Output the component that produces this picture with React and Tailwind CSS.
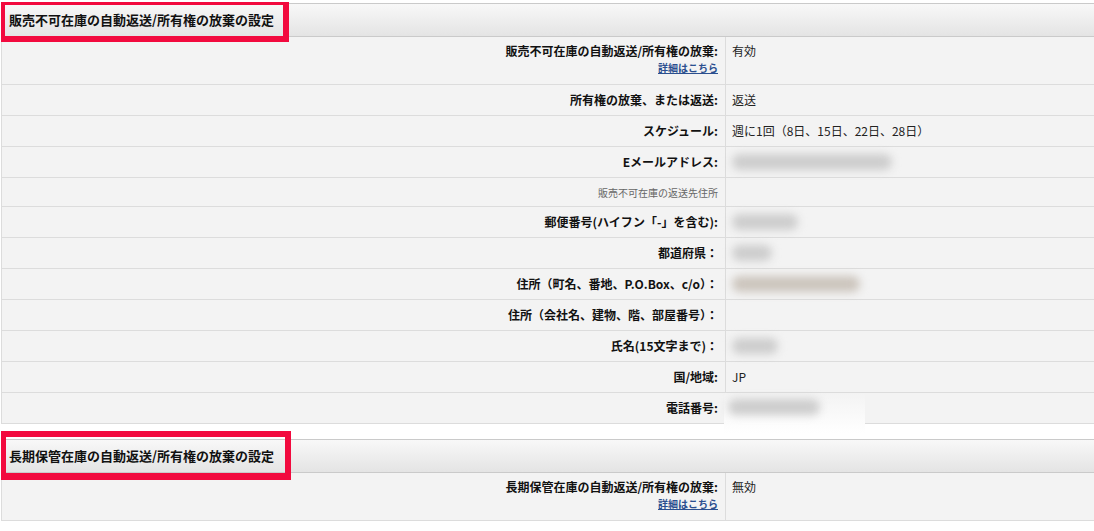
import React from "react";

const font = { fontFamily: '"Noto Sans CJK JP", "Noto Sans", sans-serif' };

function Blur({ w, tint }) {
  return (
    <div className="relative h-[20px]" style={{ width: w }}>
      <div
        className={`absolute inset-x-0 top-[2px] h-[16px] rounded-full blur-[4px] ${
          tint ? "bg-[#ccc5bd]" : "bg-[#cdcdcd]"
        }`}
      />
    </div>
  );
}

function Row({ label, value, link, sub, tall }) {
  return (
    <div className="grid grid-cols-[724px_1fr] border-b border-[#dcdcdc]">
      <div
        className={`border-r border-[#dcdcdc] pr-[7px] text-right ${
          tall ? "h-[47px] pt-[6px]" : sub ? "flex h-[28px] items-center justify-end" : "flex h-[30px] items-center justify-end"
        }`}
      >
        {sub ? (
          <span className="text-[10px] text-[#666]">{sub}</span>
        ) : (
          <div className="flex flex-col items-end">
            <span className="text-[12px] font-bold leading-[16px] text-[#111]">{label}</span>
            {link && (
              <a className="mt-[3px] text-[10px] font-bold leading-[12px] text-[#2b4f8f] underline">
                詳細はこちら
              </a>
            )}
          </div>
        )}
      </div>
      <div
        className={`pl-[6px] text-[12px] text-[#222] ${
          tall ? "pt-[6px] leading-[16px]" : "flex items-center"
        }`}
      >
        {value}
      </div>
    </div>
  );
}

function Header({ title, redClass }) {
  return (
    <div className="relative">
      <div className="flex h-[34px] items-center border-y border-[#cacaca] bg-gradient-to-b from-[#f8f8f8] to-[#e4e4e4] pl-[7px]">
        <span className="text-[13px] font-bold text-[#111]">{title}</span>
      </div>
      <div className={`pointer-events-none absolute left-[-1px] border-[#f20a3e] ${redClass}`} />
    </div>
  );
}

export default function App() {
  return (
    <div className="min-h-[531px] w-[1094px] overflow-hidden bg-white pt-[3px]" style={font}>
      {/* 販売不可在庫 */}
      <div className="ml-px border-l border-[#dcdcdc] bg-[#f3f3f3]">
        <Header
          title="販売不可在庫の自動返送/所有権の放棄の設定"
          redClass="top-[-1px] h-[40px] w-[288px] border-t-[3px] border-l-[4px] border-r-[6px] border-b-[6px]"
        />
        <Row tall link label="販売不可在庫の自動返送/所有権の放棄:" value="有効" />
        <Row label="所有権の放棄、または返送:" value="返送" />
        <Row label="スケジュール:" value="週に1回（8日、15日、22日、28日）" />
        <Row label="Eメールアドレス:" value={<Blur w={160} />} />
        <Row sub="販売不可在庫の返送先住所" />
        <Row label="郵便番号(ハイフン「-」を含む):" value={<Blur w={66} />} />
        <Row label="都道府県：" value={<Blur w={40} />} />
        <Row label="住所（町名、番地、P.O.Box、c/o）：" value={<Blur w={128} tint />} />
        <Row label="住所（会社名、建物、階、部屋番号）：" value={null} />
        <Row label="氏名(15文字まで)：" value={<Blur w={46} />} />
        <Row label="国/地域:" value="JP" />
        <div className="relative">
          <Row label="電話番号:" value={null} />
          <div className="absolute left-[722px] top-0 h-[40px] w-[141px] bg-gradient-to-b from-[#f3f3f3] to-white">
            <div className="absolute left-[4px] top-[6px] h-[16px] w-[92px] rounded-full bg-[#cdcdcd] blur-[4px]" />
          </div>
        </div>
      </div>

      {/* 長期保管在庫 */}
      <div className="ml-px mt-[15px] border-l border-[#dcdcdc] bg-[#f3f3f3]">
        <Header
          title="長期保管在庫の自動返送/所有権の放棄の設定"
          redClass="top-[-8px] h-[49px] w-[290px] border-t-[6px] border-l-[5px] border-r-[6px] border-b-[7px]"
        />
        <Row tall link label="長期保管在庫の自動返送/所有権の放棄:" value="無効" />
      </div>
    </div>
  );
}
